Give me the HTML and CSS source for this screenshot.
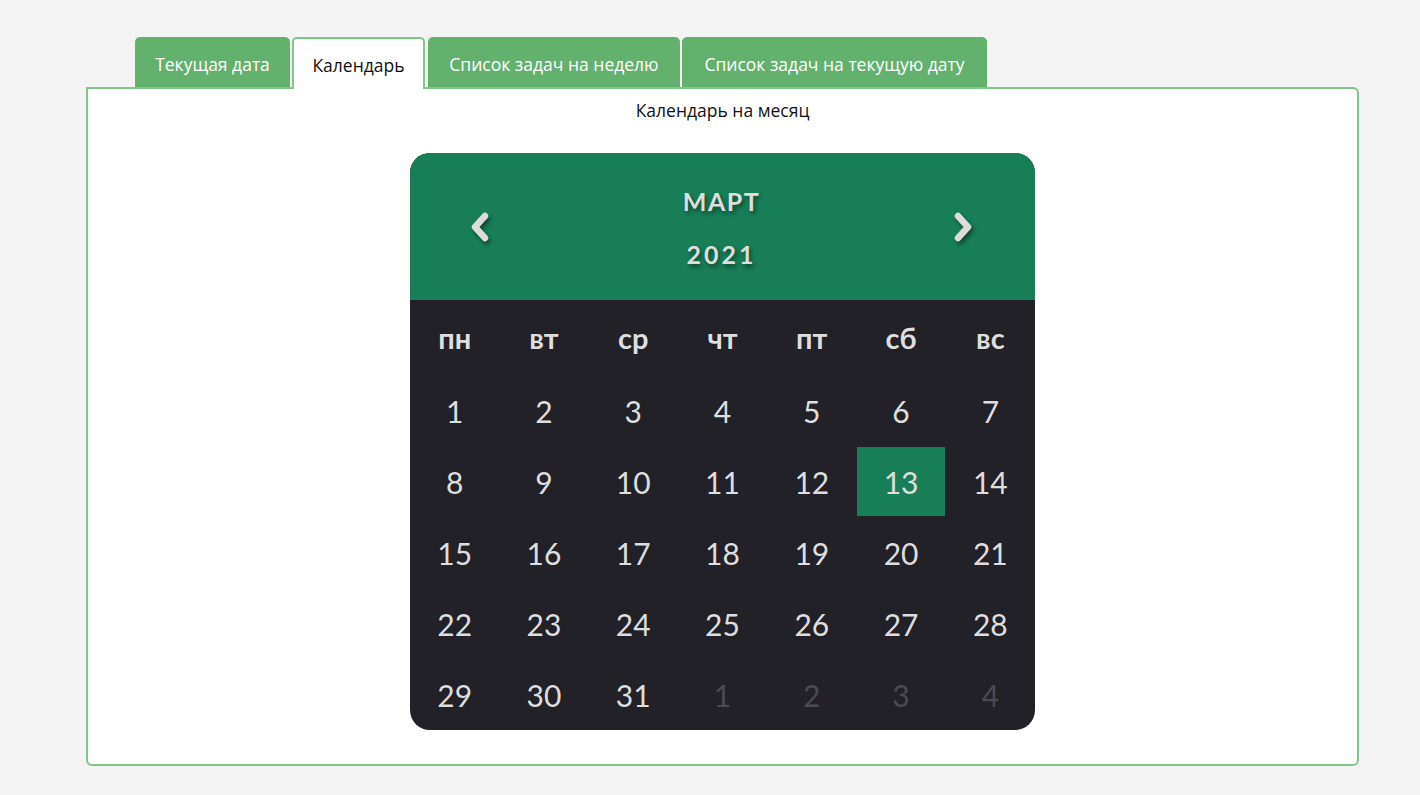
FILE: index.html
```html
<!DOCTYPE html>
<html lang="ru">
<head>
<meta charset="utf-8">
<title>Календарь</title>
<link rel="stylesheet" href="styles.css">
</head>
<body>
<div class="page">
  <nav class="tabs">
    <div class="tab tab-1">Текущая дата</div>
    <div class="tab tab-active">Календарь</div>
    <div class="tab tab-3">Список задач на неделю</div>
    <div class="tab tab-4">Список задач на текущую дату</div>
  </nav>
  <section class="panel">
    <div class="panel-title">Календарь на месяц</div>
    <div class="calendar">
      <div class="cal-head">
        <button class="arrow" aria-label="prev">
          <svg width="24" height="34" viewBox="0 0 24 34"><polyline points="16,6 6,17 16,28" fill="none" stroke="#dcdcdc" stroke-width="6.5" stroke-linecap="round" stroke-linejoin="round"/></svg>
        </button>
        <div class="cal-title">
          <div class="month">МАРТ</div>
          <div class="year">2021</div>
        </div>
        <button class="arrow" aria-label="next">
          <svg width="24" height="34" viewBox="0 0 24 34"><polyline points="8,6 18,17 8,28" fill="none" stroke="#dcdcdc" stroke-width="6.5" stroke-linecap="round" stroke-linejoin="round"/></svg>
        </button>
      </div>
      <div class="cal-body">
        <div class="wd">пн</div><div class="wd">вт</div><div class="wd">ср</div><div class="wd">чт</div><div class="wd">пт</div><div class="wd">сб</div><div class="wd">вс</div>
        <div class="d">1</div><div class="d">2</div><div class="d">3</div><div class="d">4</div><div class="d">5</div><div class="d">6</div><div class="d">7</div>
        <div class="d">8</div><div class="d">9</div><div class="d">10</div><div class="d">11</div><div class="d">12</div><div class="d today">13</div><div class="d">14</div>
        <div class="d">15</div><div class="d">16</div><div class="d">17</div><div class="d">18</div><div class="d">19</div><div class="d">20</div><div class="d">21</div>
        <div class="d">22</div><div class="d">23</div><div class="d">24</div><div class="d">25</div><div class="d">26</div><div class="d">27</div><div class="d">28</div>
        <div class="d">29</div><div class="d">30</div><div class="d">31</div><div class="d other">1</div><div class="d other">2</div><div class="d other">3</div><div class="d other">4</div>
      </div>
    </div>
  </section>
</div>
</body>
</html>
```

FILE: styles.css
```css
* { box-sizing: border-box; }
html, body { margin: 0; padding: 0; }
body {
  background: #f4f4f4;
  font-family: "Open Sans", "Noto Sans", sans-serif;
}
.page {
  padding: 37px 0 0 86px;
  width: 1359px;
}
.tabs {
  display: flex;
  margin-left: 49px;
  height: 50px;
  align-items: stretch;
}
.tab {
  background: #64b06d;
  color: #fff;
  font-size: 17.5px;
  display: flex;
  align-items: center;
  justify-content: center;
  border-radius: 5px 5px 0 0;
  height: 50px;
  padding-top: 3px;
}
.tab-1 { width: 155px; }
.tab-active {
  width: 133px;
  margin-left: 2px;
  background: #fff;
  color: #111;
  border: 2px solid #7fc68a;
  border-bottom: none;
  height: 52px;
  position: relative;
  z-index: 2;
  padding-top: 1px;
}
.tab-3 { width: 252px; margin-left: 3px; }
.tab-4 { width: 305px; margin-left: 2px; }
.panel {
  background: #fff;
  border: 2px solid #7fc68a;
  border-radius: 0 6px 6px 6px;
  height: 679px;
  display: flex;
  flex-direction: column;
  align-items: center;
}
.panel-title {
  font-size: 17.5px;
  color: #111;
  line-height: 22px;
  margin-top: 10px;
}
.calendar {
  margin-top: 32px;
  width: 625px;
  border-radius: 20px;
  overflow: hidden;
  background: #222127;
  font-family: "Lato", "Open Sans", sans-serif;
}
.cal-head {
  background: #177e57;
  height: 147px;
  display: flex;
  align-items: center;
  justify-content: space-between;
  padding: 0 61px 0 59px;
}
.arrow {
  background: none;
  border: none;
  padding: 0;
  width: 24px;
  height: 34px;
  filter: drop-shadow(2px 3px 2px rgba(0,0,0,0.45));
}
.arrow svg { display: block; }
.cal-title {
  text-align: center;
  color: #dedede;
  font-weight: 700;
  font-size: 25px;
  letter-spacing: 1.5px;
  text-shadow: 2px 3px 4px rgba(0,0,0,0.45);
  margin-top: 2px;
}
.month { line-height: 30px; }
.year { line-height: 30px; margin-top: 23px; letter-spacing: 3px; }
.cal-body {
  display: grid;
  grid-template-columns: repeat(7, 1fr);
  grid-auto-rows: 71px;
  padding-top: 4px;
  color: #dedede;
}
.wd, .d {
  display: flex;
  align-items: center;
  justify-content: center;
  margin: 1px;
}
.wd {
  font-size: 29px;
  font-weight: 700;
  padding-bottom: 4px;
}
.d {
  font-size: 30px;
}
.today { background: #177e57; }
.other { color: #4b4a52; }
```
